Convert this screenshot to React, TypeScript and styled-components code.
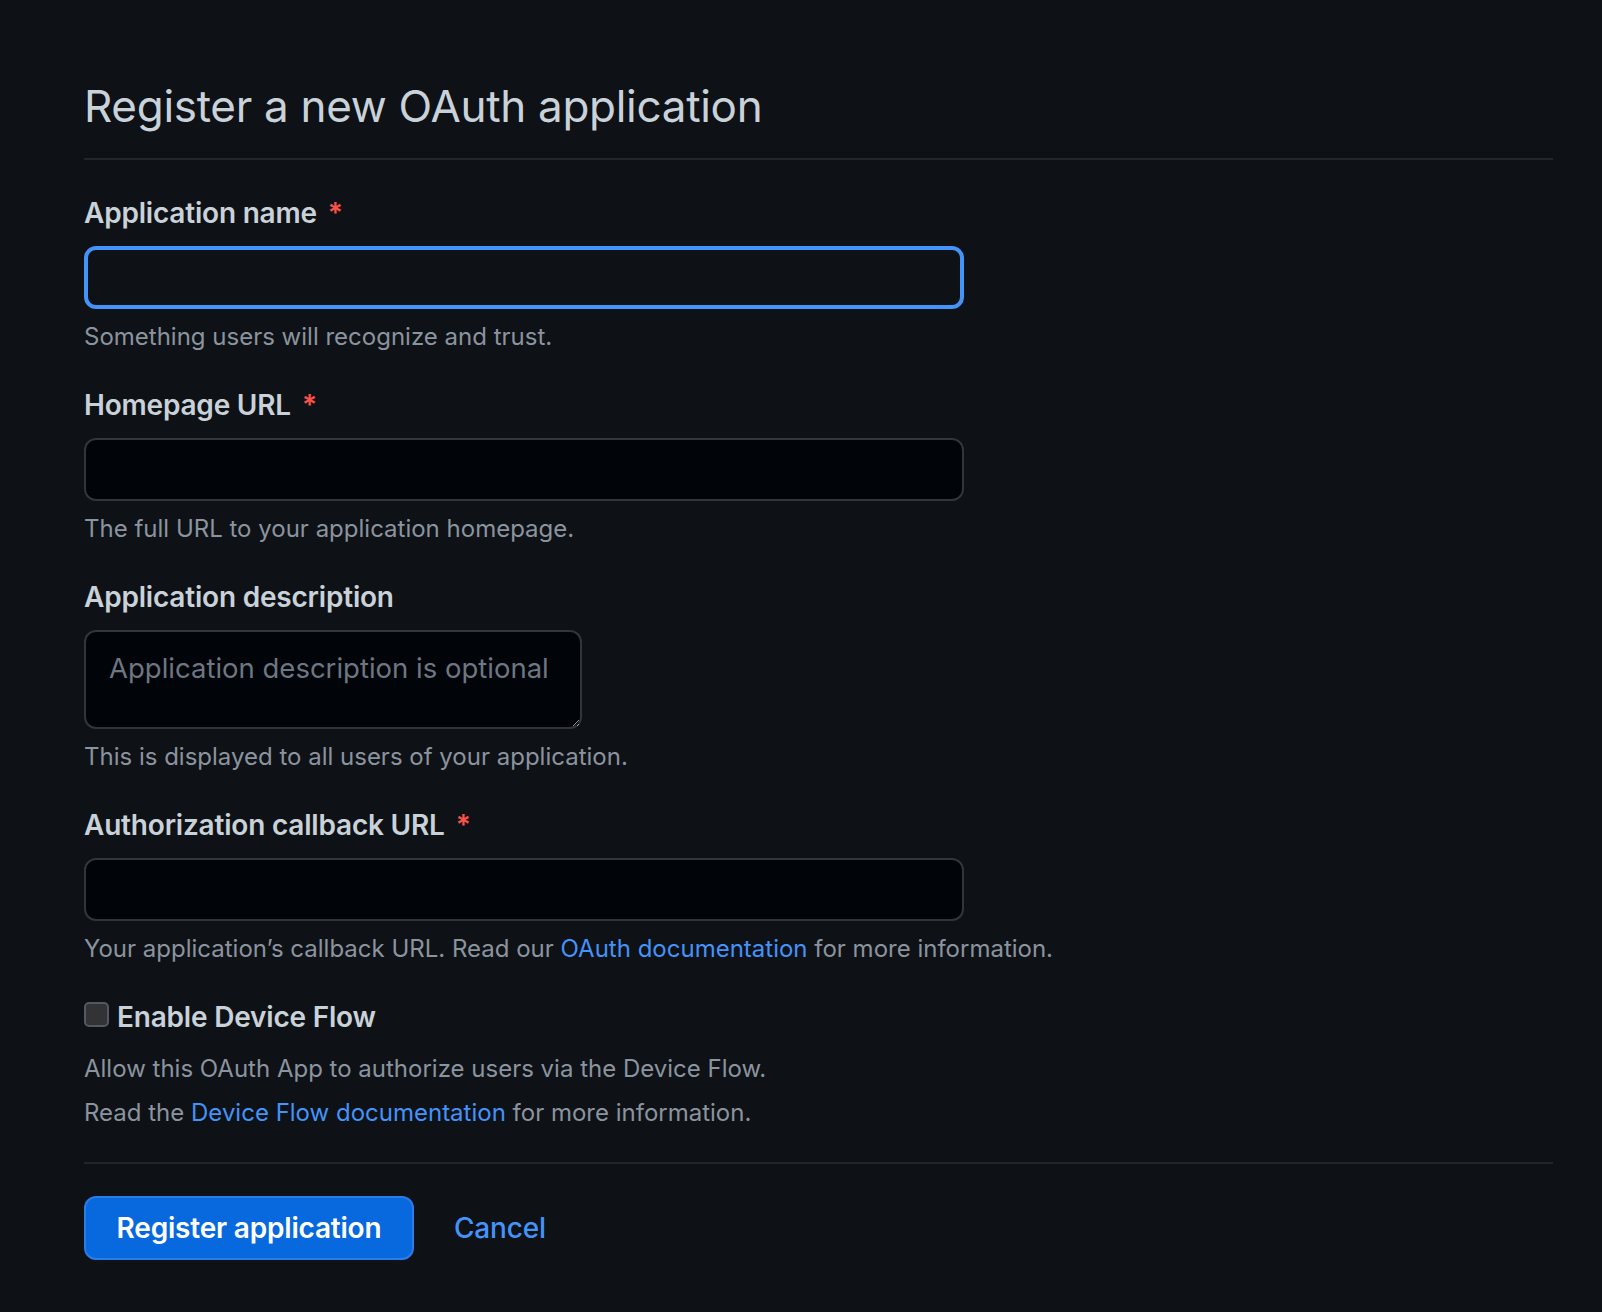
import React from "react";
import styled, { createGlobalStyle } from "styled-components";

const GlobalStyle = createGlobalStyle`
  html, body {
    margin: 0;
    background: #0e1116;
  }
  body {
    font-family: Inter, "Liberation Sans", sans-serif;
    color: #c9d1d9;
  }
`;

const Page = styled.div`
  min-height: 1312px;
  box-sizing: border-box;
  padding: 76px 49px 0 84px;
  background: #0e1116;
`;

const Subhead = styled.div`
  padding-bottom: 22px;
  border-bottom: 2px solid #22262c;
  margin-bottom: 33px;
`;

const Heading = styled.h1`
  margin: 0;
  font-size: 44px;
  line-height: 60px;
  font-weight: 400;
  color: #c9d1d9;
  letter-spacing: -0.3px;
`;

const FormGroup = styled.div`
  margin-bottom: 30px;
`;

const Label = styled.label`
  display: block;
  font-size: 28px;
  line-height: 40px;
  font-weight: 600;
  letter-spacing: -0.2px;
  color: #c9d1d9;
`;

const Required = styled.span`
  color: #f85149;
  margin-left: 11px;
`;

const Input = styled.input<{ $focused?: boolean }>`
  display: block;
  box-sizing: border-box;
  margin-top: 13px;
  width: 880px;
  height: 63px;
  padding: 0 22px;
  font: inherit;
  font-size: 28px;
  color: #c9d1d9;
  border-radius: 12px;
  outline: none;
  background: ${(p) => (p.$focused ? "#0e1116" : "#010409")};
  border: ${(p) => (p.$focused ? "4px solid #4493f8" : "2px solid #30363d")};
`;

const TextArea = styled.textarea`
  display: block;
  box-sizing: border-box;
  margin-top: 13px;
  width: 498px;
  height: 99px;
  padding: 16px 6px 16px 23px;
  font: inherit;
  font-size: 27.5px;
  line-height: 40px;
  color: #c9d1d9;
  background: #010409;
  border: 2px solid #30363d;
  border-radius: 12px;
  outline: none;
  resize: vertical;
  color-scheme: dark;

  &::placeholder {
    color: #6e7681;
  }
`;

const Note = styled.p`
  margin: 10px 0 0;
  font-size: 24px;
  line-height: 36px;
  color: #8b949e;
`;

const Link = styled.a`
  color: #4493f8;
  text-decoration: none;
`;

const CheckRow = styled.label`
  display: flex;
  align-items: center;
  gap: 8px;
  font-size: 28px;
  line-height: 40px;
  font-weight: 600;
  letter-spacing: -0.2px;
  color: #c9d1d9;
`;

const CheckBox = styled.span`
  width: 25px;
  height: 25px;
  box-sizing: border-box;
  border-radius: 5px;
  background: #323336;
  border: 2px solid #55585d;
  margin-top: -6px;
`;

const FlowNote = styled.p<{ $gap: number }>`
  margin: ${(p) => p.$gap}px 0 0;
  font-size: 24px;
  line-height: 36px;
  color: #8b949e;
`;

const Divider = styled.hr`
  border: 0;
  border-top: 2px solid #22262c;
  margin: 31px 0 32px;
`;

const Actions = styled.div`
  display: flex;
  align-items: center;
  gap: 40px;
`;

const PrimaryButton = styled.button`
  box-sizing: border-box;
  height: 64px;
  width: 330px;
  border-radius: 12px;
  border: 2px solid #2a7ce8;
  background: #0868de;
  color: #ffffff;
  font: inherit;
  font-size: 28px;
  font-weight: 600;
  letter-spacing: -0.2px;
`;

const CancelLink = styled.a`
  color: #4493f8;
  font-size: 28px;
  font-weight: 500;
  letter-spacing: -0.2px;
  text-decoration: none;
`;

export default function App() {
  return (
    <Page>
      <GlobalStyle />
      <Subhead>
        <Heading>Register a new OAuth application</Heading>
      </Subhead>

      <FormGroup>
        <Label>
          Application name<Required>*</Required>
        </Label>
        <Input $focused />
        <Note>Something users will recognize and trust.</Note>
      </FormGroup>

      <FormGroup>
        <Label>
          Homepage URL<Required>*</Required>
        </Label>
        <Input />
        <Note>The full URL to your application homepage.</Note>
      </FormGroup>

      <FormGroup>
        <Label>Application description</Label>
        <TextArea placeholder="Application description is optional" />
        <Note>This is displayed to all users of your application.</Note>
      </FormGroup>

      <FormGroup>
        <Label>
          Authorization callback URL<Required>*</Required>
        </Label>
        <Input />
        <Note>
          Your application’s callback URL. Read our <Link>OAuth documentation</Link> for more
          information.
        </Note>
      </FormGroup>

      <CheckRow>
        <CheckBox />
        Enable Device Flow
      </CheckRow>
      <FlowNote $gap={14}>Allow this OAuth App to authorize users via the Device Flow.</FlowNote>
      <FlowNote $gap={8}>
        Read the <Link>Device Flow documentation</Link> for more information.
      </FlowNote>

      <Divider />

      <Actions>
        <PrimaryButton>Register application</PrimaryButton>
        <CancelLink>Cancel</CancelLink>
      </Actions>
    </Page>
  );
}
